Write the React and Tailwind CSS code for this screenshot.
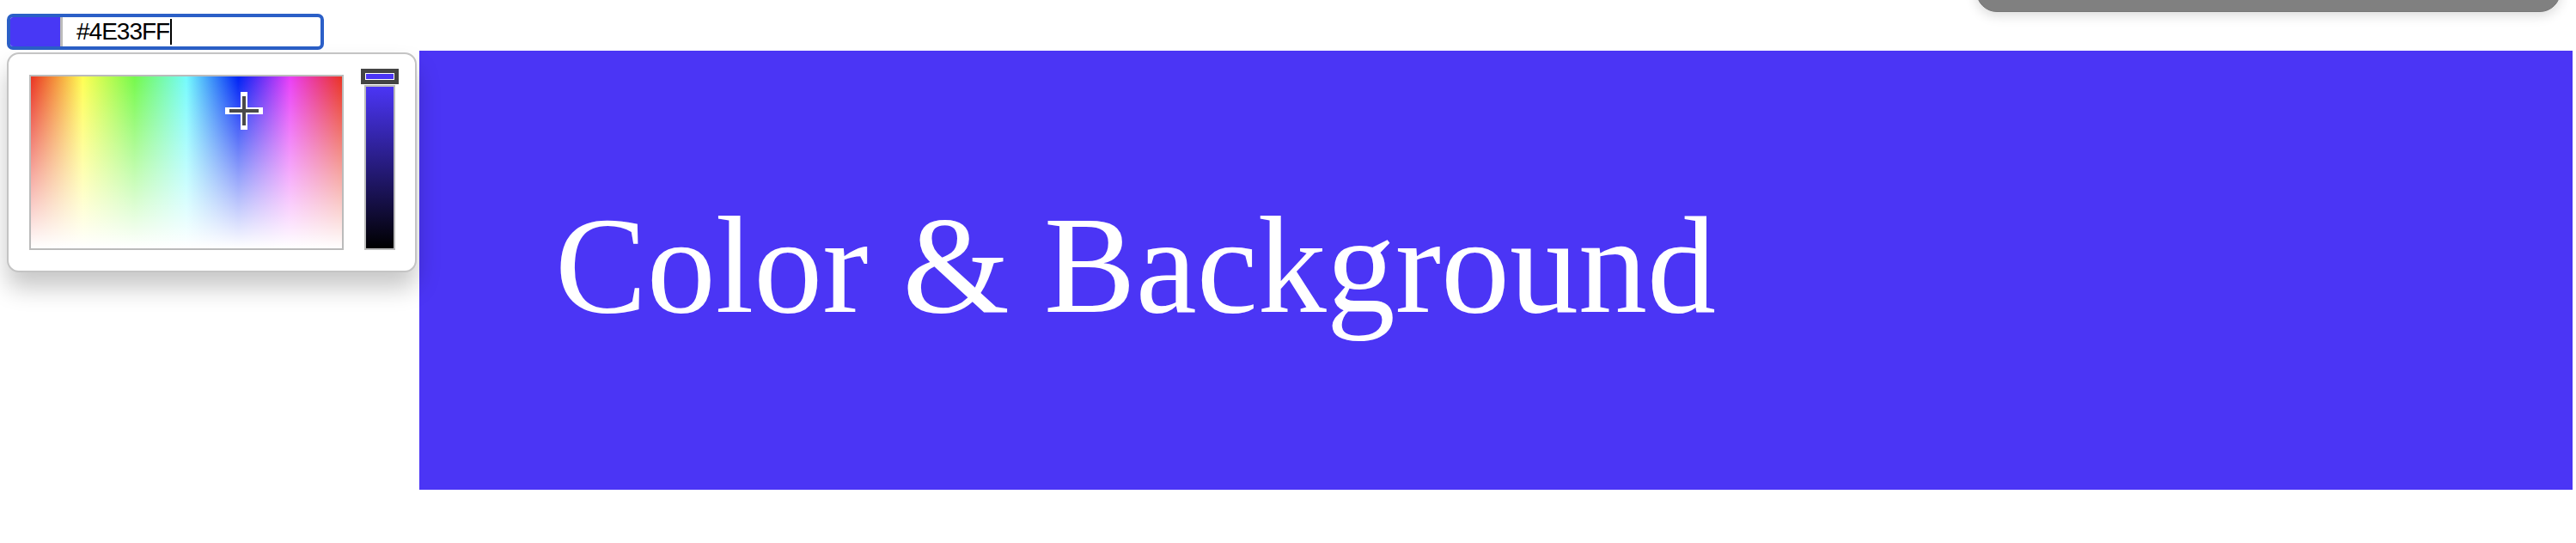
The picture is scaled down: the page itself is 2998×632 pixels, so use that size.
import React from 'react';

const hex = '#4E33FF';

function Crosshair() {
  return (
    <svg width="44" height="44" viewBox="0 0 44 44" className="absolute left-[226px] top-[18px]">
      <path d="M22 3v38M3 22h38" stroke="#ffffff" strokeWidth="8" strokeLinecap="square" />
      <path d="M22 5v34M5 22h34" stroke="#4a4a4a" strokeWidth="4" />
    </svg>
  );
}

function ColorPopover() {
  return (
    <div className="absolute left-2 top-[61px] w-[477px] h-[256px] bg-white border-2 border-[#c4c4c4] rounded-[14px] shadow-[0_18px_28px_rgba(0,0,0,0.22)] flex items-start gap-6 pl-6 pt-6">
      {/* saturation / hue area */}
      <div className="relative w-[366px] h-[204px] border-2 border-[#bbbbbb] bg-[linear-gradient(to_right,#ea3323,#fffe54,#75f94c,#75fbfd,#0023f5,#ea3ff7,#ea3323)]">
        <div className="absolute inset-0 bg-[linear-gradient(to_bottom,rgba(255,255,255,0),#ffffff)]" />
        <Crosshair />
      </div>
      {/* value slider */}
      <div className="relative w-[36px] h-[192px] mt-[12px] border-2 border-[#bbbbbb] bg-[linear-gradient(to_bottom,#4b35f5,#000000)]">
        <div className="absolute -left-[6px] -top-[21px] w-[44px] h-[18px] border-[5px] border-[#444444] bg-white p-[1px]">
          <div className="w-full h-full bg-[#4b35f5]" />
        </div>
      </div>
    </div>
  );
}

export default function App() {
  return (
    <div className="relative min-h-screen bg-white overflow-hidden font-['Liberation_Sans',Arial,sans-serif]">
      {/* gray sheet hanging from the top edge */}
      <div className="absolute right-[18px] -top-[46px] w-[680px] h-[60px] bg-[#808080] border border-[#777777] rounded-[24px] shadow-[0_4px_14px_rgba(0,0,0,0.15)]" />

      <div className="flex items-start">
        <div className="relative w-[488px] shrink-0 pt-4 pl-2">
          <div className="flex items-stretch w-[369px] h-[42px] border-4 border-[#2b5fc7] rounded-[7px] bg-white overflow-hidden">
            <div className="w-[61px] bg-[#4838f5] border-r-[3px] border-[#bbbbbb]" />
            <div className="flex items-center pl-4 text-[28px] tracking-[-1px] text-black leading-none">
              {hex}
              <span className="ml-[1px] w-[2px] h-[30px] bg-black" />
            </div>
          </div>
          <ColorPopover />
        </div>

        <div className="mt-[59px] w-[2506px] h-[511px] bg-[#4b35f5] flex items-center pl-[158px] pb-[12px]">
          <h1 className="font-['Liberation_Serif','Times_New_Roman',serif] text-[160px] leading-none text-white font-normal">
            Color &amp; Background
          </h1>
        </div>
      </div>
    </div>
  );
}
